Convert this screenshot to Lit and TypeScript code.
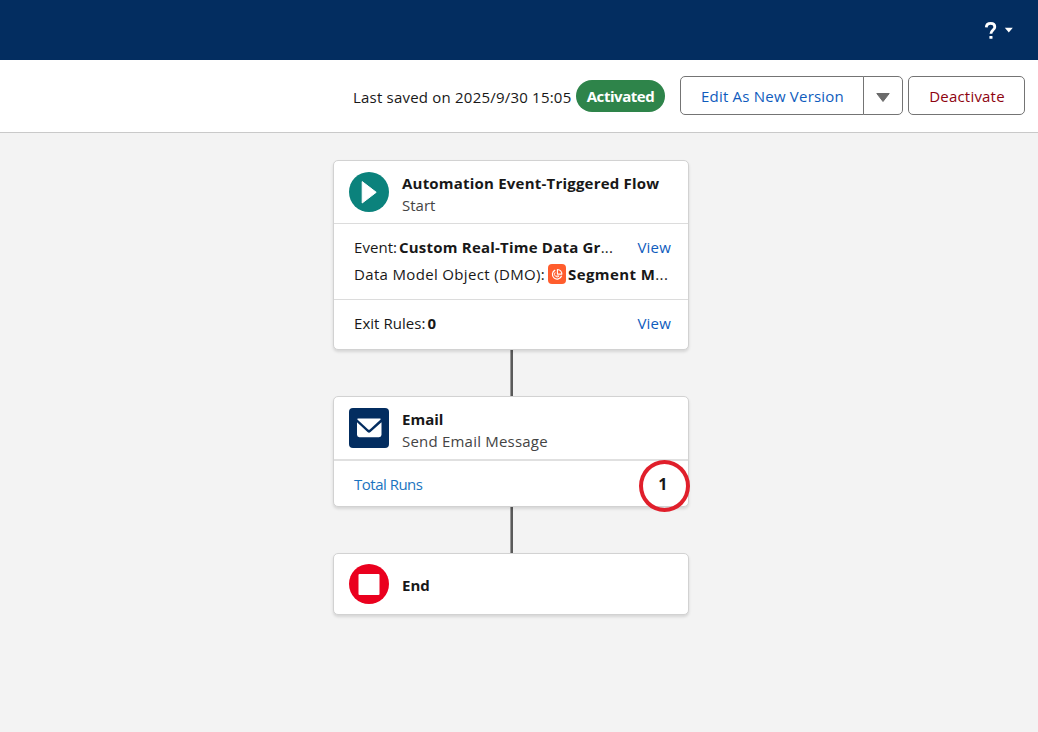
import { LitElement, html, css } from "lit";
import { customElement } from "lit/decorators.js";

@customElement("app-root")
class AppRoot extends LitElement {
  static styles = css`
    :host {
      display: flex;
      flex-direction: column;
      height: 732px;
      width: 1038px;
      overflow: hidden;
      background: #f3f3f3;
      font: 15px/20px "Open Sans", "Noto Sans", sans-serif;
      letter-spacing: 0.21px;
      color: #181818;
      white-space: nowrap;
    }
    * { box-sizing: border-box; }
    svg { display: block; flex: none; }
    b { font-weight: 700; }
    .top {
      flex: none;
      height: 60px;
      background: #032d60;
      display: flex;
      justify-content: flex-end;
      align-items: center;
      padding: 2px 24px 0 0;
    }
    .bar {
      flex: none;
      height: 73px;
      background: #fff;
      border-bottom: 1px solid #c9c9c9;
      display: flex;
      align-items: flex-start;
      justify-content: flex-end;
      padding: 16px 13px 0 0;
    }
    .saved { width: 223px; margin-top: 11px; }
    .pill {
      width: 89px;
      height: 32px;
      margin: 4px 15px 0 0;
      border-radius: 16px;
      background: #2e844a;
      color: #fff;
      font-weight: 700;
      letter-spacing: -0.45px;
      line-height: 33px;
      text-align: center;
    }
    .btn {
      height: 39px;
      border: 1px solid #747474;
      border-radius: 5px;
      background: #fff;
      display: flex;
      align-items: center;
      justify-content: center;
      font: inherit;
      letter-spacing: inherit;
      padding: 0 0 0 1px;
    }
    .edit { width: 184px; color: #0f5cbd; border-radius: 5px 0 0 5px; }
    .more { width: 40px; margin-left: -1px; padding: 3px 0 0; border-radius: 0 5px 5px 0; }
    .off { width: 117px; margin-left: 5px; color: #8e030f; }
    .flow {
      width: 356px;
      margin: 27px 0 0 333px;
      display: flex;
      flex-direction: column;
    }
    .card {
      position: relative;
      background: #fff;
      border: 1px solid #d2d2d2;
      border-radius: 5px;
      box-shadow: 0 2px 3px rgba(0, 0, 0, 0.12);
    }
    .start { height: 190px; }
    .mail { height: 111px; }
    .end { height: 62px; }
    .head {
      height: 62px;
      padding-left: 15px;
      display: flex;
      align-items: center;
      gap: 13px;
    }
    .end .head { height: 60px; }
    .title { padding-top: 4px; }
    .end .title { padding-top: 2px; }
    .head small { display: block; font-size: 15px; line-height: 22px; color: #444; }
    .head b { display: block; line-height: 22px; }
    .line { width: 3px; height: 46px; margin-left: 177px; background: linear-gradient(90deg, #999 0 1px, #5a5a5a 1px); }
    .section { border-top: 1px solid #dcdcdc; padding: 0 17px 0 20px; }
    .data { height: 76px; padding-top: 9px; }
    .exit { height: 50px; padding-top: 9px; }
    .total { height: 47px; border-top: 2px solid #e0e0e0; padding-top: 9px; }
    .row { display: flex; align-items: center; height: 27px; }
    .link { color: #0f5cbd; }
    .push { margin-left: auto; }
    .runs { color: #1b74c0; letter-spacing: -0.5px; }
    .key { flex: none; letter-spacing: 0.05px; }
    .event { width: 45px; }
    .object { width: 194px; letter-spacing: 0.34px; }
    .segment { letter-spacing: 0.4px; }
    .rules { width: 73.5px; }
    .plain { letter-spacing: 0; }
    .glyph { margin-right: 2px; }
    .ring {
      position: absolute;
      right: -2px;
      top: 63px;
      width: 51px;
      height: 52px;
      border: 4px solid #e01f2b;
      border-radius: 50%;
      display: flex;
      align-items: center;
      justify-content: center;
      padding: 0 3px 4px 0;
      font-size: 16px;
    }
  `;

  render() {
    return html`
      <header class="top">
        <svg width="30" height="20" viewBox="0 0 30 20">
          <path d="M2.3 6.4C2.4 3.6 4.1 2.4 6.7 2.4C9.2 2.4 10.8 3.8 10.8 5.9C10.8 8.9 6.9 9.2 6.9 12.8" fill="none" stroke="#fff" stroke-width="2.8" />
          <rect x="5.4" y="15" width="3.1" height="2.8" rx=".6" fill="#fff" />
          <path d="M20.8 6.8H28.8L24.8 11.6Z" fill="#fff" />
        </svg>
      </header>
      <div class="bar">
        <span class="saved">Last saved on 2025/9/30 15:05</span>
        <span class="pill">Activated</span>
        <button class="btn edit"><span>Edit As New Version</span></button>
        <button class="btn more">
          <svg width="14" height="9" viewBox="0 0 14 9"><path d="M.8.5H13.2L7 8.5Z" fill="#6b6b6b" stroke="#6b6b6b" stroke-linejoin="round" /></svg>
        </button>
        <button class="btn off"><span>Deactivate</span></button>
      </div>
      <main class="flow">
        <section class="card start">
          <div class="head">
            <svg width="40" height="40" viewBox="0 0 40 40"><circle cx="20" cy="20" r="20" fill="#0b827c" /><path d="M13.2 9.6V31L27.2 20.3Z" fill="#fff" stroke="#fff" stroke-linejoin="round" /></svg>
            <div class="title"><b>Automation Event-Triggered Flow</b><small class="plain">Start</small></div>
          </div>
          <div class="section data">
            <div class="row"><span class="key event">Event:</span><b>Custom Real-Time Data Gr</b><span>...</span><span class="link push">View</span></div>
            <div class="row">
              <span class="key object">Data Model Object (DMO):</span>
              <svg class="glyph" width="18" height="20" viewBox="0 0 18 20"><rect width="18" height="20" rx="4" fill="#ff5d2d" /><g fill="none" stroke="#fff" stroke-linejoin="round"><path d="M7.2 6.1A4.7 4.7 0 1 0 13.6 11.8" stroke-width="1.2" /><path d="M7.2 8.4A2.6 2.6 0 1 0 11.1 12H8.2" stroke-width=".9" /><path d="M9.4 5.5V10.1H13.9A4.5 4.5 0 0 0 9.4 5.5Z" stroke-width="1.1" /></g></svg>
              <b class="segment">Segment M</b><span class="segment">...</span>
            </div>
          </div>
          <div class="section exit">
            <div class="row"><span class="key rules">Exit Rules:</span><b>0</b><span class="link push">View</span></div>
          </div>
        </section>
        <div class="line"></div>
        <section class="card mail">
          <div class="head">
            <svg width="40" height="40" viewBox="0 0 40 40"><rect width="40" height="40" rx="4" fill="#032d60" /><path d="M9 10.5H31Q32 10.5 31.6 11.5L20.8 21.4Q20 22 19.2 21.4L8.4 11.5Q8 10.5 9 10.5Z" fill="#fff" /><path d="M8 14.2L18.5 24.1Q20 25.3 21.5 24.1L32.5 14.2V26.8Q32.5 29.2 30 29.2H10.4Q8 29.2 8 26.8Z" fill="#fff" /></svg>
            <div class="title"><b class="plain">Email</b><small>Send Email Message</small></div>
          </div>
          <div class="section total"><div class="row"><span class="runs">Total Runs</span></div></div>
          <div class="ring"><b>1</b></div>
        </section>
        <div class="line"></div>
        <section class="card end">
          <div class="head">
            <svg width="40" height="40" viewBox="0 0 40 40"><circle cx="20" cy="20" r="20" fill="#ea001e" /><rect x="9.5" y="10" width="21" height="21" rx="1" fill="#fff" /></svg>
            <div class="title"><b class="plain">End</b></div>
          </div>
        </section>
      </main>
    `;
  }
}
